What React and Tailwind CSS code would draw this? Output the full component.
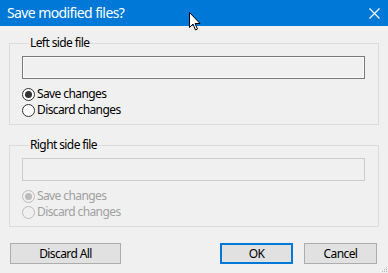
import React from 'react';

const font = { fontFamily: '"Noto Sans", "Open Sans", sans-serif' };

const Radio = ({ label, checked, disabled }) => (
    <label className={`flex items-center h-4 ${disabled ? 'text-[#a0a0a0]' : 'text-black'}`}>
        <span
            className={`w-[13px] h-[13px] rounded-full border flex items-center justify-center mr-[2px] ${
                disabled ? 'border-[#bcbcbc] bg-[#f0f0f0]' : 'border-[#333] bg-white'
            }`}
        >
            {checked && (
                <span className={`w-[7px] h-[7px] rounded-full ${disabled ? 'bg-[#bcbcbc]' : 'bg-[#333]'}`} />
            )}
        </span>
        <span>{label}</span>
    </label>
);

const FileGroup = ({ title, disabled }) => (
    <fieldset className="mx-[9px] border border-[#dcdcdc] pl-3 pr-[13px] pt-[5px] pb-[6px]">
        <legend className="px-[1px] ml-[7px] leading-4 text-black">{title}</legend>
        <div
            className={`h-[23px] border ${
                disabled ? 'border-[#cccccc]' : 'border-[#7a7a7a]'
            } bg-[#f0f0f0]`}
        >
            <div className={`h-full border ${disabled ? 'border-[#f0f0f0]' : 'border-[#fafafa]'}`} />
        </div>
        <div className="mt-[7px] flex flex-col">
            <Radio label="Save changes" checked disabled={disabled} />
            <Radio label="Discard changes" disabled={disabled} />
        </div>
    </fieldset>
);

const Button = ({ children, primary, className = '' }) => (
    <button
        className={`h-[21px] bg-[#e1e1e1] text-black ${
            primary ? 'border-2 border-[#0078d7]' : 'border border-[#adadad]'
        } ${className}`}
    >
        {children}
    </button>
);

export default function App() {
    return (
        <div
            className="relative w-[388px] h-[273px] bg-[#f0f0f0] text-[12px] tracking-[-0.6px] overflow-hidden"
            style={font}
        >
            {/* Title bar */}
            <div className="h-[26px] bg-[#0078d7] flex items-center justify-between pl-[7px] pr-[7px]">
                <span className="text-white text-[14px] leading-none">Save modified files?</span>
                <svg width="11" height="11" viewBox="0 0 11 11" className="mr-[1px]">
                    <path d="M0.5 0.5 L10.5 10.5 M10.5 0.5 L0.5 10.5" stroke="white" strokeWidth="1.2" />
                </svg>
            </div>

            <div className="pt-[9px]">
                <FileGroup title="Left side file" />
                <div className="h-[12px]" />
                <FileGroup title="Right side file" disabled />
            </div>

            {/* Buttons */}
            <div className="flex items-center mt-[16px] px-[10px]">
                <Button className="w-[111px]">Discard All</Button>
                <div className="flex-1" />
                <Button primary className="w-[73px]">OK</Button>
                <Button className="w-[73px] ml-[11px]">Cancel</Button>
                <div className="w-[1px]" />
            </div>

            {/* Resize grip */}
            <svg width="6" height="6" viewBox="0 0 6 6" className="absolute right-0 bottom-0">
                <rect x="4" y="0" width="1" height="1" fill="#b4b4b4" />
                <rect x="2" y="2" width="1" height="1" fill="#b4b4b4" />
                <rect x="4" y="2" width="1" height="1" fill="#b4b4b4" />
                <rect x="0" y="4" width="1" height="1" fill="#b4b4b4" />
                <rect x="2" y="4" width="1" height="1" fill="#b4b4b4" />
                <rect x="4" y="4" width="1" height="1" fill="#b4b4b4" />
            </svg>

            {/* Mouse cursor */}
            <svg width="13" height="20" viewBox="0 0 13 20" className="absolute left-[189px] top-[12px]">
                <path
                    d="M0.5 0.5 L0.5 15.5 L4 12 L6.5 18 L8.5 17 L6 11.5 L11 11.5 Z"
                    fill="white"
                    stroke="black"
                    strokeWidth="1"
                    strokeLinejoin="miter"
                />
            </svg>
        </div>
    );
}
